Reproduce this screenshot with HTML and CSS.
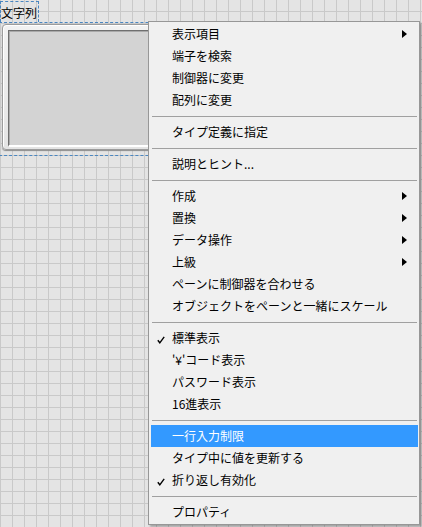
FILE: index.html
```html
<!DOCTYPE html>
<html lang="ja">
<head>
<meta charset="utf-8">
<title>文字列</title>
<link rel="stylesheet" href="styles.css">
</head>
<body>
<div class="panel">
  <div class="label">文字列</div>
  <div class="selection"></div>
  <div class="control">
    <div class="control-inner"></div>
  </div>

  <div class="menu">
    <div class="item sub">表示項目<span class="arrow"></span></div>
    <div class="item">端子を検索</div>
    <div class="item">制御器に変更</div>
    <div class="item">配列に変更</div>
    <div class="sep"></div>
    <div class="item">タイプ定義に指定</div>
    <div class="sep"></div>
    <div class="item">説明とヒント...</div>
    <div class="sep"></div>
    <div class="item sub">作成<span class="arrow"></span></div>
    <div class="item sub">置換<span class="arrow"></span></div>
    <div class="item sub">データ操作<span class="arrow"></span></div>
    <div class="item sub">上級<span class="arrow"></span></div>
    <div class="item">ペーンに制御器を合わせる</div>
    <div class="item">オブジェクトをペーンと一緒にスケール</div>
    <div class="sep"></div>
    <div class="item"><svg class="check" width="8" height="8" viewBox="0 0 8 8"><path d="M0.8 4.2 L2.8 6.8 L7.2 0.8" fill="none" stroke="#000" stroke-width="1.4"/></svg>標準表示</div>
    <div class="item">'¥'コード表示</div>
    <div class="item">パスワード表示</div>
    <div class="item">16進表示</div>
    <div class="sep"></div>
    <div class="item active">一行入力制限</div>
    <div class="item">タイプ中に値を更新する</div>
    <div class="item"><svg class="check" width="8" height="8" viewBox="0 0 8 8"><path d="M0.8 4.2 L2.8 6.8 L7.2 0.8" fill="none" stroke="#000" stroke-width="1.4"/></svg>折り返し有効化</div>
    <div class="sep"></div>
    <div class="item">プロパティ</div>
  </div>
</div>
</body>
</html>
```
FILE: styles.css
```css
html, body {
  margin: 0;
  padding: 0;
}
body {
  width: 422px;
  height: 527px;
  overflow: hidden;
  font-family: "Noto Sans CJK JP", "Noto Sans", sans-serif;
  font-size: 12px;
  color: #000;
}
.panel {
  position: relative;
  width: 422px;
  height: 527px;
  background-color: #e4e4e4;
  background-image:
    linear-gradient(to right, #c9c9c9 1px, transparent 1px),
    linear-gradient(to bottom, #c9c9c9 1px, transparent 1px);
  background-size: 12px 12px, 12px 12px;
  background-position: 0 0, 0 11px;
}
.label {
  position: absolute;
  left: 0;
  top: 1px;
  width: 39px;
  height: 21px;
  box-sizing: border-box;
  border: 1px dashed #4a86c0;
  border-bottom: none;
  line-height: 21px;
  padding-left: 0;
  white-space: nowrap;
}
.selection {
  position: absolute;
  left: -1px;
  top: 22px;
  width: 200px;
  height: 134px;
  box-sizing: border-box;
  border: 1px dashed #4a86c0;
}
.control {
  position: absolute;
  left: 2px;
  top: 24px;
  width: 200px;
  height: 126px;
  box-sizing: border-box;
  border: 1px solid #9c9c9c;
  border-radius: 4px;
  padding: 5px 0 2px 5px;
  background: linear-gradient(#f2f2f2, #e4e4e4);
  box-shadow: 0 1px 1px #8c8c8c, inset 1px 1px 0 #ffffff;
  display: flex;
}
.control-inner {
  flex: 1;
  background: #d3d3d3;
  border-top: 1px solid #6f6f6f;
  border-left: 1px solid #6f6f6f;
  border-bottom: 2px solid #ffffff;
  box-shadow: inset 1px 1px 0 #a9a9a9;
}
.menu {
  position: absolute;
  left: 148px;
  top: 21px;
  width: 272px;
  box-sizing: border-box;
  background: #f0f0f0;
  border: 1px solid #979797;
  padding: 1px 1px 1px 2px;
  box-shadow: 2px 2px 2px rgba(0, 0, 0, 0.28);
  display: flex;
  flex-direction: column;
}
.item {
  position: relative;
  height: 22px;
  line-height: 22px;
  padding-left: 21px;
  white-space: nowrap;
  display: flex;
  align-items: center;
}
.item.active {
  background: #3399ff;
  color: #fff;
}
.arrow {
  position: absolute;
  right: 11px;
  top: 7px;
  width: 0;
  height: 0;
  border-left: 5px solid #000;
  border-top: 4.5px solid transparent;
  border-bottom: 4.5px solid transparent;
}
.check {
  position: absolute;
  left: 6px;
  top: 9px;
}
.sep {
  height: 10px;
  box-sizing: border-box;
  padding: 5px 1px 0 1px;
}
.sep::before {
  content: "";
  display: block;
  height: 1px;
  background: #a0a0a0;
}
```
